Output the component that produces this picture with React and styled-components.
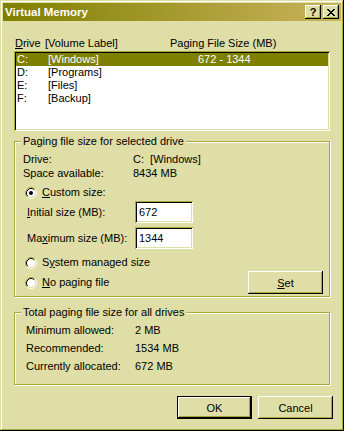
import React from 'react';
import styled, { createGlobalStyle } from 'styled-components';

const FACE = '#dfdea6';
const SHADOW = '#a8a83c';
const DARK = '#000000';
const LIGHT = '#ffffff';
const SELECT = '#808000';

const Global = createGlobalStyle`
  html, body { margin: 0; padding: 0; background: ${FACE}; }
  body {
    font-family: "Liberation Sans", Arial, sans-serif;
    font-size: 11px;
    color: #000;
  }
  * { box-sizing: border-box; }
`;

const Window = styled.div`
  width: 344px;
  height: 431px;
  padding: 3px;
  background: ${FACE};
  display: flex;
  flex-direction: column;
  box-shadow: inset -1px -1px ${DARK}, inset 1px 1px ${FACE},
    inset -2px -2px ${SHADOW}, inset 2px 2px ${LIGHT};
`;

const TitleBar = styled.div`
  height: 18px;
  display: flex;
  align-items: center;
  padding: 0 2px;
  gap: 2px;
  background: linear-gradient(to right, #808000, #c9b35c);
`;

const TitleText = styled.div`
  flex: 1;
  color: #fff;
  font-weight: bold;
  font-size: 11.5px;
  line-height: 13px;
`;

const CaptionButton = styled.div`
  width: 16px;
  height: 14px;
  background: ${FACE};
  display: flex;
  align-items: center;
  justify-content: center;
  font-weight: bold;
  font-size: 11px;
  line-height: 11px;
  box-shadow: inset -1px -1px ${DARK}, inset 1px 1px ${LIGHT},
    inset -2px -2px ${SHADOW};
`;

const Body = styled.div`
  flex: 1;
  display: flex;
  flex-direction: column;
  padding: 16px 8px 0 11px;
`;

const ColumnHeader = styled.div`
  display: grid;
  grid-template-columns: 30px 125px 1fr;
  padding-left: 1px;
  line-height: 13px;
  margin-right: 3px;
  white-space: nowrap;
`;

const ListBox = styled.div`
  margin: 1px 3px 0 0;
  height: 80px;
  padding: 2px;
  background: #fff;
  box-shadow: inset 1px 1px ${SHADOW}, inset -1px -1px ${LIGHT},
    inset 2px 2px ${DARK}, inset -2px -2px ${FACE};
`;

const ListRow = styled.div`
  display: grid;
  grid-template-columns: 31px 150px 1fr;
  height: 13px;
  line-height: 13px;
  padding-left: 1px;
  white-space: pre;
  background: ${(p) => (p.$selected ? SELECT : 'transparent')};
  color: ${(p) => (p.$selected ? '#fff' : '#000')};
`;

const Group = styled.fieldset`
  margin: ${(p) => p.$top}px 3px 0 0;
  padding: 0;
  min-width: 0;
  border: 1px solid ${SHADOW};
  box-shadow: inset 1px 1px ${LIGHT}, 1px 1px ${LIGHT};
`;

const Legend = styled.legend`
  margin-left: 6px;
  padding: 0 2px;
  line-height: 13px;
  background: ${FACE};
`;

const GroupBody = styled.div`
  display: flex;
  flex-direction: column;
  padding: ${(p) => p.$pad};
  gap: ${(p) => p.$gap || 0}px;
`;

const InfoRow = styled.div`
  display: grid;
  grid-template-columns: ${(p) => p.$col}px 1fr;
  line-height: 13px;
  white-space: pre;
  margin-top: ${(p) => p.$mt || 0}px;
`;

const RadioRow = styled.div`
  display: flex;
  align-items: center;
  gap: 5px;
  height: 13px;
  margin: ${(p) => p.$mt || 0}px 0 0 2px;
  line-height: 13px;
`;

const FieldRow = styled.div`
  display: grid;
  grid-template-columns: 108px 58px;
  align-items: center;
  margin: ${(p) => p.$mt || 0}px 0 0 4px;
`;

const TextBox = styled.div`
  height: 22px;
  padding: 0 4px;
  display: flex;
  align-items: center;
  background: #fff;
  box-shadow: inset 1px 1px ${SHADOW}, inset -1px -1px ${LIGHT},
    inset 2px 2px ${DARK}, inset -2px -2px ${FACE};
`;

const BottomRow = styled.div`
  display: flex;
  align-items: center;
  justify-content: space-between;
  margin-top: 2px;
  padding-right: 6px;
`;

const ButtonRow = styled.div`
  display: flex;
  justify-content: flex-end;
  gap: 6px;
  margin-top: 11px;
`;

const PushButton = styled.div`
  width: 75px;
  height: 23px;
  display: flex;
  align-items: center;
  justify-content: center;
  background: ${FACE};
  border: ${(p) => (p.$default ? `1px solid ${DARK}` : 'none')};
  box-shadow: inset -1px -1px ${DARK}, inset 1px 1px ${LIGHT},
    inset -2px -2px ${SHADOW};
`;

const RadioSvg = styled.svg`
  width: 12px;
  height: 12px;
  flex: none;
`;

function Radio({ checked }) {
  return (
    <RadioSvg viewBox="0 0 12 12">
      <circle cx="6" cy="6" r="4.5" fill="#fff" />
      <path d="M2.11 9.89 A5.5 5.5 0 0 1 9.89 2.11" fill="none" stroke={SHADOW} strokeWidth="1" />
      <path d="M9.89 2.11 A5.5 5.5 0 0 1 2.11 9.89" fill="none" stroke={LIGHT} strokeWidth="1" />
      <path d="M2.82 9.18 A4.5 4.5 0 0 1 9.18 2.82" fill="none" stroke={DARK} strokeWidth="1" />
      <path d="M9.18 2.82 A4.5 4.5 0 0 1 2.82 9.18" fill="none" stroke={FACE} strokeWidth="1" />
      {checked && <circle cx="6" cy="6" r="2" fill="#000" />}
    </RadioSvg>
  );
}

function CloseGlyph() {
  return (
    <svg width="8" height="7" viewBox="0 0 8 7" shapeRendering="crispEdges">
      <path
        d="M0 0h2v1H0zM6 0h2v1H6zM1 1h2v1H1zM5 1h2v1H5zM2 2h4v1H2zM3 3h2v1H3zM2 4h4v1H2zM1 5h2v1H1zM5 5h2v1H5zM0 6h2v1H0zM6 6h2v1H6z"
        fill="#000"
      />
    </svg>
  );
}

const drives = [
  { d: 'C:', label: '[Windows]', size: '672 - 1344', selected: true },
  { d: 'D:', label: '[Programs]', size: '' },
  { d: 'E:', label: '[Files]', size: '' },
  { d: 'F:', label: '[Backup]', size: '' },
];

export default function App() {
  return (
    <>
      <Global />
      <Window>
        <TitleBar>
          <TitleText>Virtual Memory</TitleText>
          <CaptionButton>?</CaptionButton>
          <CaptionButton>
            <CloseGlyph />
          </CaptionButton>
        </TitleBar>
        <Body>
          <ColumnHeader>
            <span><u>D</u>rive</span>
            <span>[Volume Label]</span>
            <span>Paging File Size (MB)</span>
          </ColumnHeader>
          <ListBox>
            {drives.map((r) => (
              <ListRow key={r.d} $selected={r.selected}>
                <span>{r.d}</span>
                <span>{r.label}</span>
                <span>{r.size}</span>
              </ListRow>
            ))}
          </ListBox>

          <Group $top={4}>
            <Legend>Paging file size for selected drive</Legend>
            <GroupBody $pad="5px 0 2px 8px">
              <InfoRow $col={110}>
                <span>Drive:</span>
                <span>C:  [Windows]</span>
              </InfoRow>
              <InfoRow $col={110} $mt={1}>
                <span>Space available:</span>
                <span>8434 MB</span>
              </InfoRow>
              <RadioRow $mt={6}>
                <Radio checked />
                <span><u>C</u>ustom size:</span>
              </RadioRow>
              <FieldRow $mt={2}>
                <span><u>I</u>nitial size (MB):</span>
                <TextBox>672</TextBox>
              </FieldRow>
              <FieldRow $mt={4}>
                <span>Ma<u>x</u>imum size (MB):</span>
                <TextBox>1344</TextBox>
              </FieldRow>
              <RadioRow $mt={7}>
                <Radio />
                <span>S<u>y</u>stem managed size</span>
              </RadioRow>
              <BottomRow>
                <RadioRow>
                  <Radio />
                  <span><u>N</u>o paging file</span>
                </RadioRow>
                <PushButton><span><u>S</u>et</span></PushButton>
              </BottomRow>
            </GroupBody>
          </Group>

          <Group $top={9}>
            <Legend>Total paging file size for all drives</Legend>
            <GroupBody $pad="5px 0 11px 11px" $gap={5}>
              <InfoRow $col={109}>
                <span>Minimum allowed:</span>
                <span>2 MB</span>
              </InfoRow>
              <InfoRow $col={109}>
                <span>Recommended:</span>
                <span>1534 MB</span>
              </InfoRow>
              <InfoRow $col={109}>
                <span>Currently allocated:</span>
                <span>672 MB</span>
              </InfoRow>
            </GroupBody>
          </Group>

          <ButtonRow>
            <PushButton $default>OK</PushButton>
            <PushButton>Cancel</PushButton>
          </ButtonRow>
        </Body>
      </Window>
    </>
  );
}
